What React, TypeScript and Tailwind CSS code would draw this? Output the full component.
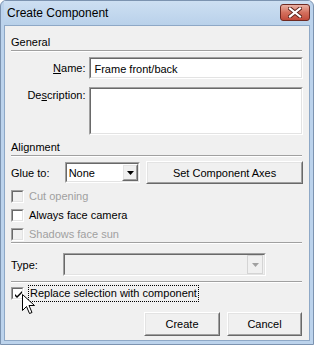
import type { ReactNode } from "react";

const font = { fontFamily: '"Liberation Sans", Arial, sans-serif' };

function Sunken({ className, children, disabled }: { className: string; children?: ReactNode; disabled?: boolean }) {
  return (
    <div className={`border border-t-[#a0a0a0] border-l-[#a0a0a0] border-r-white border-b-white ${className}`}>
      <div
        className={`h-full border border-t-[#696969] border-l-[#696969] border-r-[#e3e3e3] border-b-[#e3e3e3] ${
          disabled ? "bg-[#f0f0f0]" : "bg-white"
        }`}
      >
        {children}
      </div>
    </div>
  );
}

function Raised({ className, children }: { className: string; children?: ReactNode }) {
  return (
    <div className={`border border-t-white border-l-white border-r-[#696969] border-b-[#696969] ${className}`}>
      <div className="flex h-full items-center justify-center border border-t-[#e3e3e3] border-l-[#e3e3e3] border-r-[#a0a0a0] border-b-[#a0a0a0] bg-[#f0f0f0]">
        {children}
      </div>
    </div>
  );
}

function Arrow({ color }: { color: string }) {
  return (
    <svg width="7" height="4" viewBox="0 0 7 4">
      <path d="M0 0h7L3.5 4z" fill={color} />
    </svg>
  );
}

function Separator() {
  return <div className="border-t border-t-[#a0a0a0] border-b border-b-white" />;
}

function Box({ disabled, checked }: { disabled?: boolean; checked?: boolean }) {
  return (
    <Sunken className="h-[13px] w-[13px] shrink-0" disabled={disabled}>
      {checked && (
        <svg width="11" height="11" viewBox="0 0 11 11" className="block">
          <path d="M2 5l2 2 5-5v2l-5 5-2-2z" fill="#000" />
        </svg>
      )}
    </Sunken>
  );
}

function CheckRow({ label, disabled }: { label: string; disabled?: boolean }) {
  return (
    <div className="flex h-[13px] items-center">
      <Box disabled={disabled} />
      <span className={`ml-[5px] text-[11px] leading-[13px] ${disabled ? "text-[#a0a0a0]" : "text-black"}`}>{label}</span>
    </div>
  );
}

export default function App() {
  return (
    <div className="h-[345px] w-[315px] bg-white" style={font}>
      <div className="flex h-[345px] w-[314px] flex-col rounded-t-[6px] border border-[#7c93b0] bg-[#bcd3ec] px-[3px] pb-[3px]">
        {/* title bar */}
        <div className="flex h-[24px] items-center justify-between bg-gradient-to-b from-[#cddff2] to-[#b9d1ea] pl-[3px]">
          <span className="text-[12px] text-black">Create Component</span>
          <div className="mt-[-2px] flex h-[17px] w-[30px] items-center justify-center rounded-[3px] border border-[#6e2a22] bg-gradient-to-b from-[#e9b2a5] via-[#d4705e] to-[#c24b3b]">
            <svg width="14" height="11" viewBox="0 0 14 11">
              <path d="M2 1.5l10 8M12 1.5l-10 8" stroke="#5a2119" strokeWidth="4" strokeLinecap="square" />
              <path d="M2 1.5l10 8M12 1.5l-10 8" stroke="#fff" strokeWidth="2.2" strokeLinecap="square" />
            </svg>
          </div>
        </div>

        {/* client area */}
        <div className="flex flex-1 flex-col border border-[#8ea8c6] bg-[#f0f0f0] px-[6px] text-[11px] text-black">
          <div className="mt-[9px] h-[14px] leading-[14px]">General</div>
          <div className="mt-[1px] mr-[1px]">
            <Separator />
          </div>

          <div className="mt-[5px] flex items-start">
            <div className="w-[75px] pt-[4px] text-right leading-[14px]">
              <span className="underline">N</span>ame:
            </div>
            <Sunken className="ml-[4px] h-[22px] w-[215px]">
              <div className="pl-[3px] pt-[3px] leading-[14px]">Frame front/back</div>
            </Sunken>
          </div>

          <div className="mt-[8px] flex items-start">
            <div className="w-[75px] pt-[1px] text-right leading-[14px]">
              De<span className="underline">s</span>cription:
            </div>
            <Sunken className="ml-[4px] h-[48px] w-[215px]" />
          </div>

          <div className="mt-[5px] h-[14px] leading-[14px]">Alignment</div>
          <div className="mt-[1px] mr-[1px]">
            <Separator />
          </div>

          <div className="mt-[4px] flex items-center">
            <div className="w-[54px] leading-[14px]">Glue to:</div>
            <Sunken className="h-[21px] w-[76px]">
              <div className="flex h-full items-center">
                <span className="flex-1 pl-[2px] leading-[14px]">None</span>
                <Raised className="h-[17px] w-[16px]">
                  <Arrow color="#000" />
                </Raised>
              </div>
            </Sunken>
            <Raised className="ml-[6px] h-[23px] w-[158px]">
              <span className="leading-[14px]">Set Component Axes</span>
            </Raised>
          </div>

          <div className="mt-[6px] flex flex-col gap-[6px]">
            <CheckRow label="Cut opening" disabled />
            <CheckRow label="Always face camera" />
            <CheckRow label="Shadows face sun" disabled />
          </div>

          <div className="mt-[1px] mr-[1px]">
            <Separator />
          </div>

          <div className="mt-[9px] flex items-center">
            <div className="w-[52px] leading-[14px]">Type:</div>
            <Sunken className="h-[23px] w-[203px]" disabled>
              <div className="flex h-full items-center justify-end pr-[1px]">
                <div className="flex h-[19px] w-[16px] items-center justify-center border border-[#d4d4d4] bg-[#f0f0f0]">
                  <Arrow color="#a0a0a0" />
                </div>
              </div>
            </Sunken>
          </div>

          <div className="mt-[5px] mr-[1px]">
            <Separator />
          </div>

          <div className="relative mt-[2px] flex items-center">
            <Box checked />
            <span className="ml-[4px] border border-dotted border-black px-[1px] leading-[15px]">
              Replace selection with component
            </span>
            <svg className="absolute left-[11px] top-[9px]" width="14" height="21" viewBox="0 0 14 21">
              <path
                d="M0.5 0.5v16l4-4 3 7 2.5-1-3-7h5.5z"
                fill="#fff"
                stroke="#000"
                strokeWidth="1"
                strokeLinejoin="round"
              />
            </svg>
          </div>

          <div className="mt-[10px] flex justify-end gap-[7px] pr-[1px]">
            <Raised className="h-[24px] w-[76px]">
              <span className="leading-[14px]">Create</span>
            </Raised>
            <Raised className="h-[24px] w-[75px]">
              <span className="leading-[14px]">Cancel</span>
            </Raised>
          </div>
        </div>
      </div>
    </div>
  );
}
